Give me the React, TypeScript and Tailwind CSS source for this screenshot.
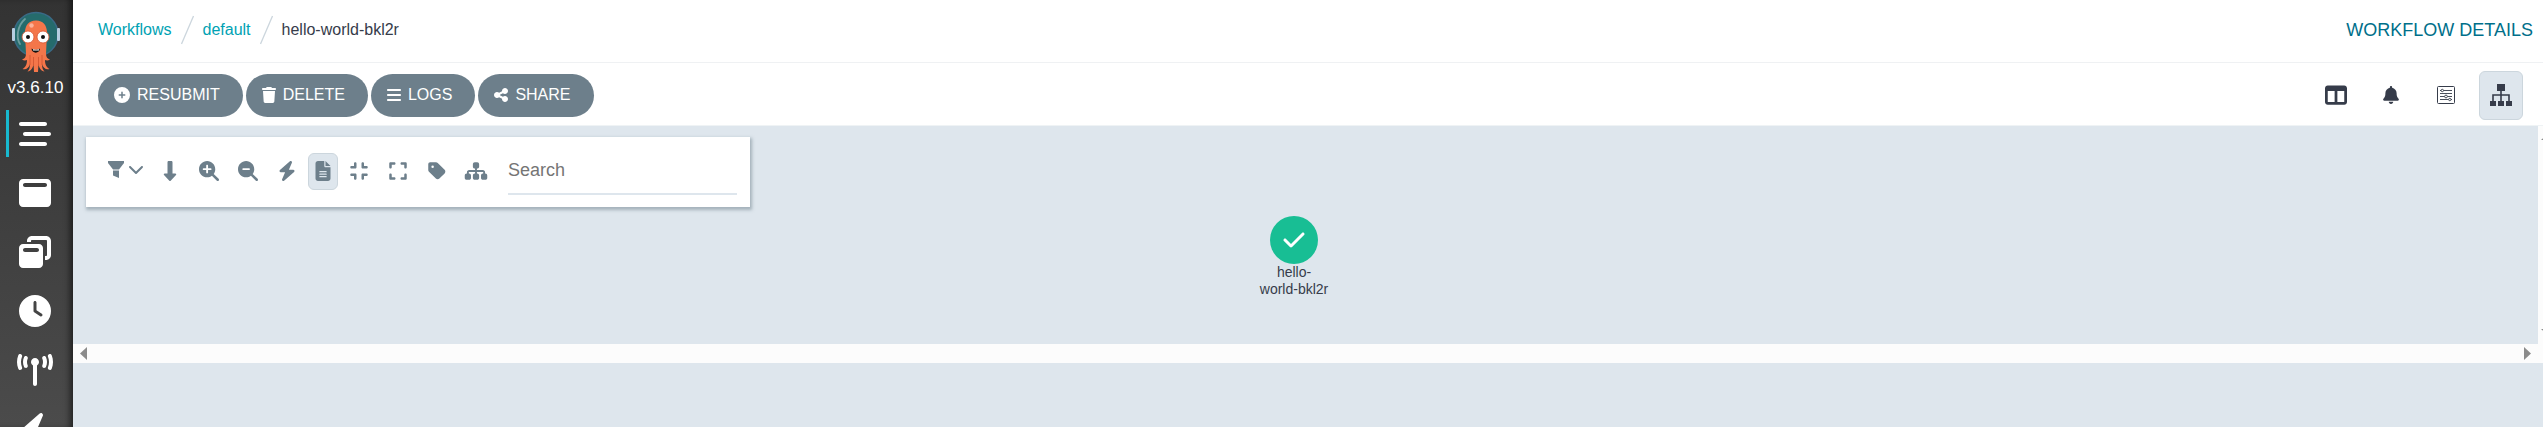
import type { ReactNode } from "react";
import {
  FaBars,
  FaBarsStaggered,
  FaBell,
  FaBolt,
  FaCheck,
  FaChevronDown,
  FaCirclePlus,
  FaClock,
  FaCompress,
  FaDownLong,
  FaExpand,
  FaFileLines,
  FaMagnifyingGlassMinus,
  FaMagnifyingGlassPlus,
  FaShareNodes,
  FaSitemap,
  FaTableColumns,
  FaTag,
  FaTowerBroadcast,
  FaTrash,
  FaWindowMaximize,
  FaWindowRestore,
} from "react-icons/fa6";

const NAV = [
  { label: "Workflows", icon: <FaBarsStaggered />, active: true },
  { label: "Workflow Templates", icon: <FaWindowMaximize /> },
  { label: "Cluster Workflow Templates", icon: <FaWindowRestore /> },
  { label: "Cron Workflows", icon: <FaClock /> },
  { label: "Event Flow", icon: <FaTowerBroadcast className="h-8 w-9" /> },
  { label: "Sensors", icon: <FaBolt /> },
];

const ACTIONS = [
  { label: "RESUBMIT", icon: <FaCirclePlus className="size-4" /> },
  { label: "DELETE", icon: <FaTrash className="h-4 w-3.5" /> },
  { label: "LOGS", icon: <FaBars className="h-4 w-3.5" /> },
  { label: "SHARE", icon: <FaShareNodes className="h-4 w-3.5" /> },
];

const GRAPH_TOOLS = [
  { label: "Vertical layout", icon: <FaDownLong /> },
  { label: "Zoom in", icon: <FaMagnifyingGlassPlus /> },
  { label: "Zoom out", icon: <FaMagnifyingGlassMinus /> },
  { label: "Fast render", icon: <FaBolt /> },
  { label: "Show artifacts", icon: <FaFileLines />, active: true },
  { label: "Collapse all", icon: <FaCompress /> },
  { label: "Expand all", icon: <FaExpand /> },
  { label: "Node tags", icon: <FaTag /> },
  { label: "Node types", icon: <FaSitemap className="h-5 w-6" /> },
];

export default function App() {
  return (
    <div className="flex h-screen overflow-hidden bg-[#dee6ed] font-['Liberation_Sans',Arial,sans-serif] text-base text-[#363c4a]">
      <Sidebar />
      <main className="flex min-w-0 flex-1 flex-col">
        <TopBar />
        <Toolbar />
        <Graph />
      </main>
    </div>
  );
}

function Sidebar() {
  return (
    <nav className="flex w-[73px] shrink-0 flex-col bg-linear-to-b from-[#333333] to-[#4b4b4b] text-white shadow-[inset_-6px_0_6px_-3px_rgba(0,0,0,0.55)]">
      <div className="flex h-[110px] shrink-0 flex-col items-center pt-[11px] pr-[2px]">
        <Logo />
        <span className="mt-[3px] text-[17px] leading-6">v3.6.10</span>
      </div>
      <div className="flex flex-col gap-3">
        {NAV.map((item) => (
          <a
            key={item.label}
            href="#"
            aria-label={item.label}
            className={`ml-[6px] flex h-[47px] shrink-0 items-center border-l-[3px] pl-[10px] text-[32px] ${
              item.active ? "border-[#18b9cf]" : "border-transparent"
            }`}
          >
            <span className="flex w-8 justify-center [&_svg]:shrink-0">{item.icon}</span>
          </a>
        ))}
      </div>
    </nav>
  );
}

function TopBar() {
  return (
    <header className="flex h-[63px] shrink-0 items-center justify-between border-b border-[#eff1f3] bg-white pr-[10px] pb-[2px] pl-[25px]">
      <div className="flex items-center gap-[9px]">
        <a href="#" className="text-[#00a2b3]">Workflows</a>
        <Slash />
        <a href="#" className="text-[#00a2b3]">default</a>
        <Slash />
        <span>hello-world-bkl2r</span>
      </div>
      <h1 className="text-[18px] text-[#006f8a]">WORKFLOW DETAILS</h1>
    </header>
  );
}

function Slash() {
  return (
    <svg width="13" height="30" viewBox="0 0 13 30" aria-hidden="true">
      <path d="M0.500 29 12.500 1" stroke="#ccd6dd" strokeWidth="1.3" />
    </svg>
  );
}

function Toolbar() {
  return (
    <div className="flex h-[63px] shrink-0 items-center justify-between border-b border-[#eff3f5] bg-white pt-[2px] pr-[20px] pl-[25px]">
      <div className="flex gap-[3px]">
        {ACTIONS.map((action) => (
          <button
            key={action.label}
            className="flex h-[43px] items-center gap-[7px] rounded-full bg-[#6d7f8b] pr-[23px] pl-4 text-white"
          >
            {action.icon}
            {action.label}
          </button>
        ))}
      </div>
      <div className="flex items-center gap-[11px]">
        <ViewButton label="Summary">
          <FaTableColumns className="text-[22px]" />
        </ViewButton>
        <ViewButton label="Events">
          <FaBell className="text-[18px]" />
        </ViewButton>
        <ViewButton label="Parameters">
          <SlidersIcon />
        </ViewButton>
        <ViewButton label="Graph" active>
          <TreeIcon />
        </ViewButton>
      </div>
    </div>
  );
}

function ViewButton({ label, active, children }: { label: string; active?: boolean; children: ReactNode }) {
  return (
    <button
      aria-label={label}
      className={`flex h-[49px] w-11 items-center justify-center rounded-md border ${
        active ? "border-[#ccd6dd] bg-[#dee6ed]" : "border-transparent"
      }`}
    >
      {children}
    </button>
  );
}

function Graph() {
  return (
    <section>
      <div className="flex h-[218px]">
        <div className="min-w-0 flex-1 pt-[11px] pl-[13px]">
          <GraphPanel />
          <div className="flex flex-col items-center pt-[9px] pr-[36px]">
            <div className="flex size-12 items-center justify-center rounded-full bg-[#18be94] text-2xl text-white">
              <FaCheck />
            </div>
            <div className="w-[70px] text-center text-[14px] leading-[17px]">hello-world-bkl2r</div>
          </div>
        </div>
        <div className="flex w-[5px] flex-col justify-between overflow-hidden bg-[#fcfcfc] py-2 pl-[3px]">
          <svg width="14" height="7" viewBox="0 0 14 7" className="shrink-0" aria-hidden="true">
            <path d="M0 6 6.500 0 13 6Z" fill="#8b8b8b" />
          </svg>
          <svg width="14" height="7" viewBox="0 0 14 7" className="shrink-0" aria-hidden="true">
            <path d="M0 0H13L6.500 6Z" fill="#8b8b8b" />
          </svg>
        </div>
      </div>
      <div className="flex h-[19px] items-center justify-between bg-[#fcfcfc] pr-3 pl-[7px]">
        <svg width="7" height="13" viewBox="0 0 7 13" aria-hidden="true">
          <path d="M7 0V13L0 6.500Z" fill="#8b8b8b" />
        </svg>
        <svg width="7" height="13" viewBox="0 0 7 13" aria-hidden="true">
          <path d="M0 0V13L7 6.500Z" fill="#8b8b8b" />
        </svg>
      </div>
    </section>
  );
}

function GraphPanel() {
  return (
    <div className="flex h-[70px] w-[664px] items-center bg-white pr-[13px] pb-[2px] pl-[22px] text-[#6d7f8b] shadow-[1px_2px_3px_1px_rgba(109,127,139,0.5)]">
      <button aria-label="Filter nodes" className="mr-2 flex items-center gap-1 pb-1">
        <FilterIcon />
        <FaChevronDown className="text-[16px]" />
      </button>
      <div className="flex items-center gap-[3px]">
        {GRAPH_TOOLS.map((tool) => (
          <button
            key={tool.label}
            aria-label={tool.label}
            className={`flex h-[37px] items-center justify-center rounded-md border text-[20px] ${
              tool.active ? "w-[30px] border-[#ccd6dd] bg-[#dee6ed]" : "w-9 border-transparent"
            }`}
          >
            {tool.icon}
          </button>
        ))}
      </div>
      <input
        type="text"
        aria-label="Search"
        placeholder="Search"
        className="ml-[14px] h-12 min-w-0 flex-1 border-b-2 border-[#dee6ed] text-[18px] text-[#363c4a] outline-none placeholder:text-[#757575]"
      />
    </div>
  );
}

function FilterIcon() {
  return (
    <svg width="16" height="17" viewBox="0 0 16 17" fill="currentColor" aria-hidden="true">
      <path d="M0 0H16V2L11 8.500H5L0 2Z" />
      <path d="M5 9.500H11V17L5 14.500Z" />
    </svg>
  );
}

function SlidersIcon() {
  return (
    <svg width="18" height="18" viewBox="0 0 18 18" fill="none" stroke="#363c4a" aria-hidden="true">
      <rect x="0.500" y="0.500" width="17" height="17" rx="1" />
      <g strokeWidth="0.9">
        <path d="M3 4.500H4M6.500 4.500H15M3 7.500H15M3 10.500H7.500M10.500 10.500H15M3 13.500H11.500M14 13.500H15" />
        <circle cx="5.300" cy="4.500" r="1.200" />
        <circle cx="9" cy="10.500" r="1.400" />
        <circle cx="12.800" cy="13.500" r="1.200" />
      </g>
    </svg>
  );
}

function TreeIcon() {
  return (
    <svg width="22" height="22" viewBox="0 0 22 22" fill="#363c4a" aria-hidden="true">
      <rect x="7" y="0" width="8" height="7" />
      <path d="M3 17V11H19V17M11 7V17" fill="none" stroke="#363c4a" strokeWidth="1.600" />
      <rect x="0" y="17" width="6" height="5" />
      <rect x="8" y="17" width="6" height="5" />
      <rect x="16" y="17" width="6" height="5" />
    </svg>
  );
}

function Logo() {
  return (
    <svg width="48" height="62" viewBox="0 0 48 62" className="shrink-0" aria-hidden="true">
      <circle cx="24" cy="23.500" r="22" fill="#256b6c" stroke="#3a6a86" strokeWidth="1.500" />
      <path d="M13 8C5 15 4 27 8 33" fill="none" stroke="#6d9c9e" strokeWidth="1.800" strokeLinecap="round" />
      <rect x="0" y="17" width="3" height="13" rx="1" fill="#b6cde0" />
      <rect x="45" y="17" width="3" height="13" rx="1" fill="#b6cde0" />
      <path
        d="M24 9.500C16.500 9.500 13 15 13 21.500L14 43C14 46 12.500 48 10 48.500 12 50 14 49.500 15 49 15 53 14 56 10.500 58 14 59 17 57 18 53 18 57 17 59 15.500 60.500 19 60 21 57 21.500 53L22 61H26L26.500 53C27 57 29 60 32.500 60.500 31 59 30 57 30 53 31 57 34 59 37.500 58 34 56 33 53 33 49 34 49.500 36 50 38 48.500 35.500 48 34 46 34 43L35 21.500C35 15 31.500 9.500 24 9.500Z"
        fill="#f4764a"
      />
      <path d="M18 44V54M21.500 46V55M26.500 46V55M30 44V54" stroke="#cf5330" strokeWidth="0.800" />
      <circle cx="19.500" cy="14.500" r="2.200" fill="#fab199" />
      <circle cx="16" cy="26" r="6" fill="#fff" stroke="#d9532f" strokeWidth="0.800" />
      <circle cx="31" cy="26" r="6" fill="#fff" stroke="#d9532f" strokeWidth="0.800" />
      <circle cx="16" cy="26" r="2" fill="#111" />
      <circle cx="31" cy="26" r="2" fill="#111" />
      <path d="M19.500 37.500C21.500 39 26 39 28 37.500 28 43 19.500 43 19.500 37.500Z" fill="#111" />
      <path d="M21 38.200C23 38.800 25 38.800 27 38.200V39.500H21Z" fill="#fff" />
    </svg>
  );
}
